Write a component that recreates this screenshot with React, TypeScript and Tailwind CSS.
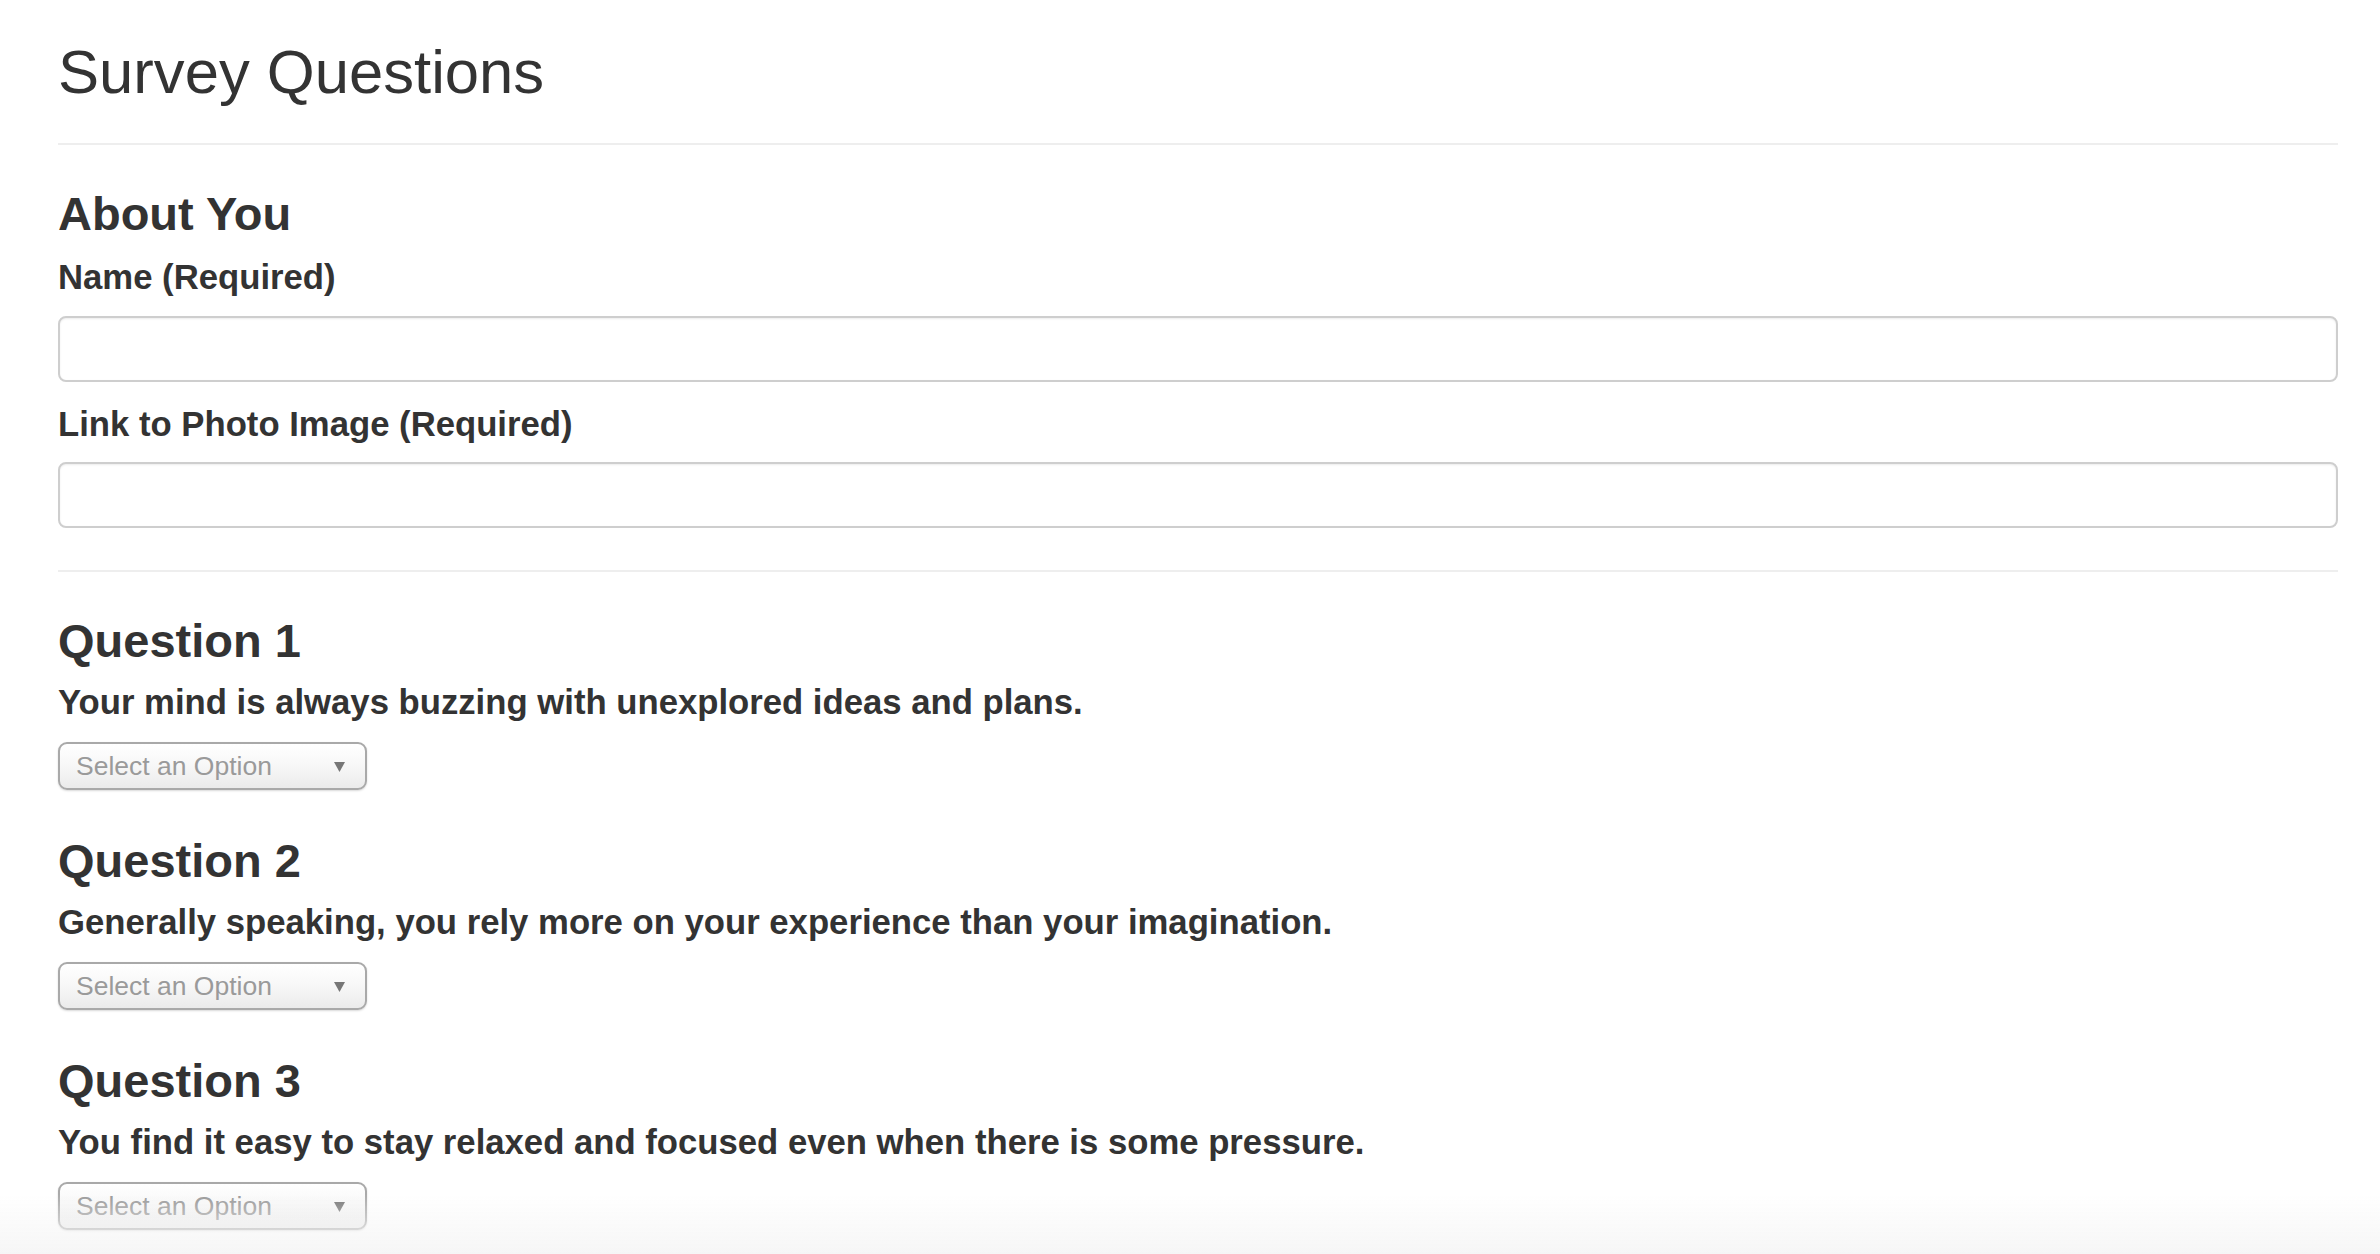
import React from "react";

const questions = [
  "Your mind is always buzzing with unexplored ideas and plans.",
  "Generally speaking, you rely more on your experience than your imagination.",
  "You find it easy to stay relaxed and focused even when there is some pressure.",
];

function FakeSelect() {
  return (
    <div className="mt-[20px] flex h-[48px] w-[309px] items-center justify-between rounded-[9px] border-2 border-[#a9a9a9] bg-linear-to-b from-white via-[#f7f7f7] to-[#ebebeb] pl-[16px] pr-[20px] shadow-[0_1px_2px_rgba(0,0,0,0.15)]">
      <span className="text-[26.5px] leading-[30px] font-normal text-[#9a9a9a]">Select an Option</span>
      <svg width="11" height="10" viewBox="0 0 11 10" className="mt-[1px]">
        <polygon points="0,0 11,0 5.5,10" fill="#777777" />
      </svg>
    </div>
  );
}

export default function App() {
  return (
    <div className="relative min-h-screen bg-white pl-[58px] pr-[42px] pt-[37px] pb-[60px] text-[#333333] font-['Liberation_Sans',Arial,Helvetica,sans-serif]">
      <h1 className="text-[61.6px] leading-[70px] font-normal">Survey Questions</h1>
      <div className="mt-[36px] h-[2px] bg-[#eeeeee]" />

      <h3 className="mt-[43px] text-[47px] leading-[52px] font-bold">About You</h3>
      <label className="mt-[17px] block text-[34.7px] leading-[40px] font-bold">Name (Required)</label>
      <input
        type="text"
        className="mt-[19px] block h-[66px] w-full rounded-[8px] border-2 border-[#cecece] bg-white shadow-[inset_0_1px_2px_rgba(0,0,0,0.08)] outline-none"
      />
      <label className="mt-[22px] block text-[34.7px] leading-[40px] font-bold">Link to Photo Image (Required)</label>
      <input
        type="text"
        className="mt-[18px] block h-[66px] w-full rounded-[8px] border-2 border-[#cecece] bg-white shadow-[inset_0_1px_2px_rgba(0,0,0,0.08)] outline-none"
      />
      <div className="mt-[42px] h-[2px] bg-[#eeeeee]" />

      {questions.map((q, i) => (
        <div key={i} className={i === 0 ? "mt-[43px]" : "mt-[45px]"}>
          <h3 className="text-[47px] leading-[52px] font-bold">Question {i + 1}</h3>
          <p className="mt-[15px] text-[34.7px] leading-[40px] font-bold">{q}</p>
          <FakeSelect />
        </div>
      ))}

      <div className="pointer-events-none fixed bottom-0 left-0 right-0 h-[60px] bg-linear-to-b from-white/0 to-[#f6f6f6]" />
    </div>
  );
}
